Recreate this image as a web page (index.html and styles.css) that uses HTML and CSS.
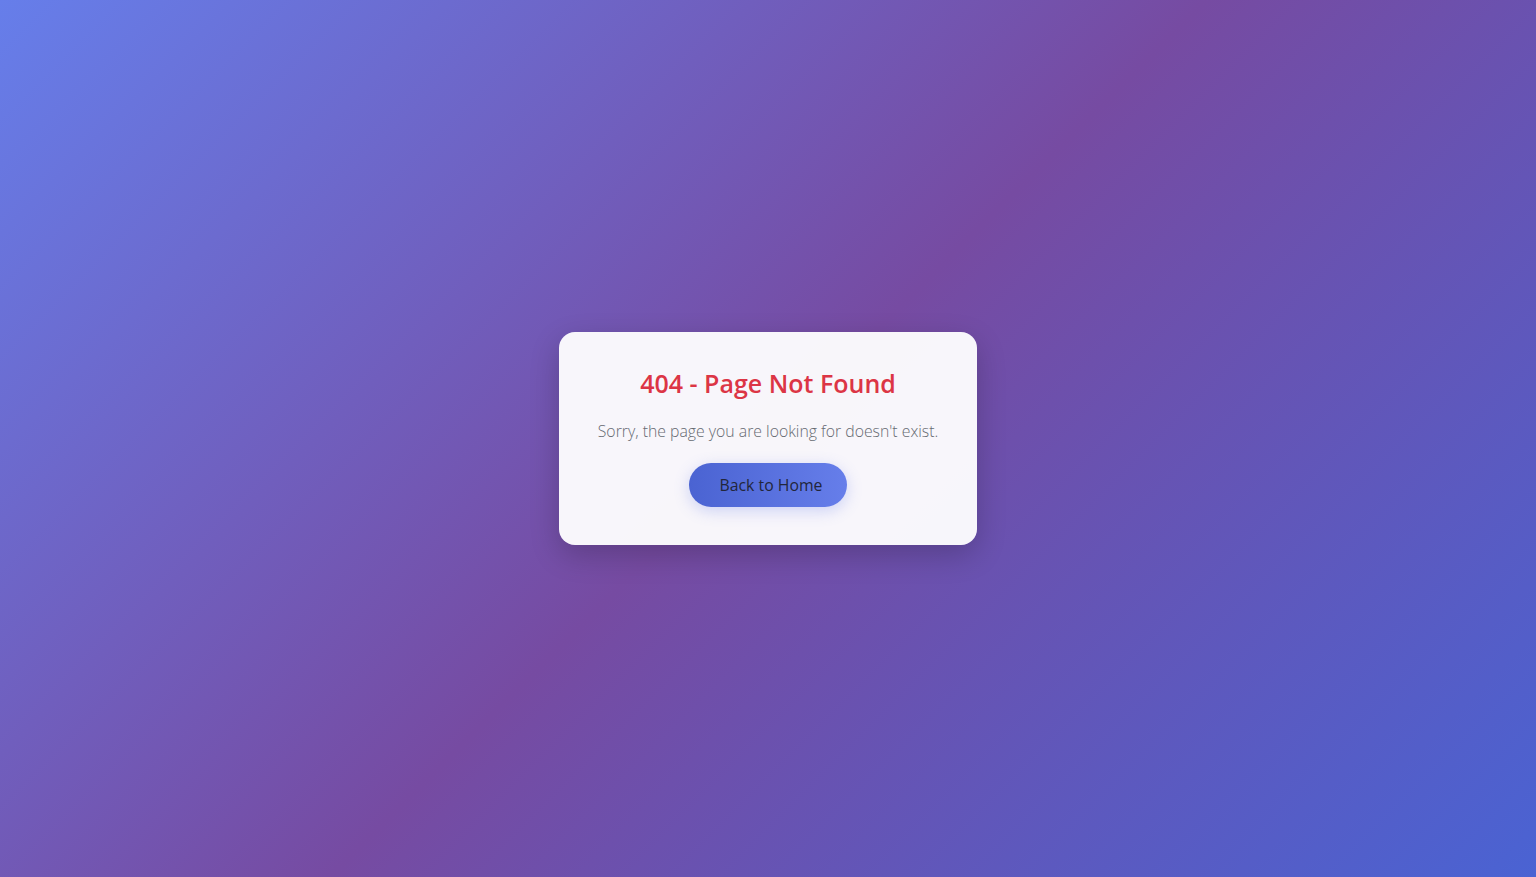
FILE: index.html
```html
<!DOCTYPE html>
<html lang="en">
<head>
<meta charset="utf-8">
<title>404 - Page Not Found</title>
<link rel="stylesheet" href="styles.css">
</head>
<body>
<main class="page">
  <section class="card">
    <h1 class="title">404 - Page Not Found</h1>
    <p class="message">Sorry, the page you are looking for doesn't exist.</p>
    <a class="home-btn" href="#">Back to Home</a>
  </section>
</main>
</body>
</html>
```
FILE: styles.css
```css
* { box-sizing: border-box; }
html, body { margin: 0; height: 100%; }
body {
  font-family: "Open Sans", "Noto Sans", sans-serif;
  background: linear-gradient(135deg, #667eea 0%, #764ba2 50%, #4a63d3 100%);
  min-height: 100vh;
}
.page {
  min-height: 100vh;
  display: flex;
  align-items: center;
  justify-content: center;
}
.card {
  background: rgba(255, 255, 255, 0.95);
  border-radius: 16px;
  padding: 37px 39px 38px;
  box-shadow: 0 10px 30px rgba(0, 0, 0, 0.2);
  display: flex;
  flex-direction: column;
  align-items: center;
  text-align: center;
}
.title {
  margin: 0;
  font-size: 25px;
  line-height: 28px;
  font-weight: 600;
  color: #dc3545;
}
.message {
  margin: 22px 0 20px;
  font-size: 15.8px;
  line-height: 24px;
  font-weight: 300;
  color: #666a72;
}
.home-btn {
  display: inline-flex;
  align-items: center;
  justify-content: center;
  height: 44px;
  width: 158px;
  padding-left: 6px;
  border-radius: 22px;
  background: linear-gradient(90deg, #4a63d2 0%, #667eea 100%);
  box-shadow: 0 4px 15px rgba(102, 126, 234, 0.3);
  color: #22263a;
  font-size: 15.8px;
  font-weight: 500;
  text-decoration: none;
}
```
